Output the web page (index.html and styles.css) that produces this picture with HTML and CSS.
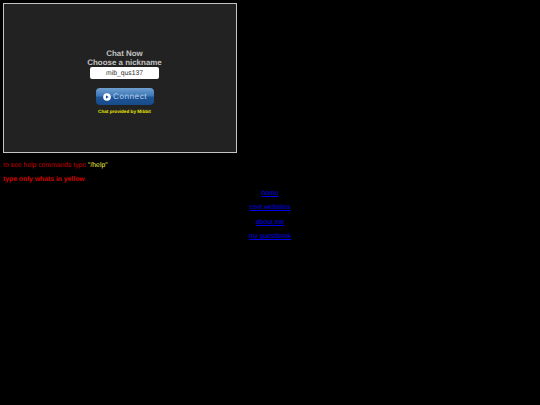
FILE: index.html
```html
<!DOCTYPE html>
<html>
<head>
<meta charset="utf-8">
<title>Chat</title>
<link rel="stylesheet" href="styles.css">
</head>
<body>
<div class="chat">
  <div class="title">Chat Now</div>
  <div class="title">Choose a nickname</div>
  <div class="nick">mib_qus137</div>
  <div class="connect">
    <svg class="play" width="8" height="8" viewBox="0 0 9 9"><circle cx="4.5" cy="4.5" r="4.3" fill="#fff"/><path d="M3.3 2.4 6.4 4.5 3.3 6.6Z" fill="#1d4f8c"/></svg>
    <span>Connect</span>
  </div>
  <div class="credit">Chat provided by Mibbit</div>
</div>
<p class="help">to see help commands type <span class="cmd">"/help"</span></p>
<p class="only">type only whats in yellow</p>
<p class="link"><a href="#">home</a></p>
<p class="link"><a href="#">cool websites</a></p>
<p class="link"><a href="#">about me</a></p>
<p class="link"><a href="#">my guestbook</a></p>
</body>
</html>
```
FILE: styles.css
```css
html { background: #000; }
body {
  margin: 0;
  padding: 3px 0 0 3px;
  font-family: "Liberation Sans", Arial, sans-serif;
  font-size: 6.8px;
  color: #c00;
  text-rendering: geometricPrecision;
}
.chat {
  padding: 45px 0 0 9px;
  box-sizing: content-box;
  width: 223px;
  height: 103px;
  border: 1px solid #c4c4c4;
  background: #222;
  display: flex;
  flex-direction: column;
  align-items: center;
}
.title { font-size: 7.95px; font-weight: bold; color: #c4c4c4; line-height: 9px; }
.nick {
  width: 69px;
  height: 12px;
  background: #fff;
  border-radius: 2px;
  color: #333;
  font-size: 6.8px;
  line-height: 13px;
  text-align: center;
}
.connect {
  width: 58px;
  height: 17px;
  margin-top: 9px;
  border-radius: 4px;
  background: linear-gradient(#6f9fd0 0%, #3f78b8 45%, #1f5596 55%, #174a88 100%);
  display: flex;
  align-items: center;
  justify-content: center;
  gap: 2px;
  color: #b9d0ea;
  font-size: 8.2px;
  letter-spacing: .5px;
}
.play { flex: none; margin-left: 1px; }
.credit { margin-top: 4px; font-size: 4.65px; font-weight: bold; color: #e6e600; line-height: 6px; }
p { margin: 0; }
.help { margin-top: 8.5px; line-height: 8px; color: #c00000; }
.cmd { color: #f0f040; }
.only { margin-top: 6px; font-weight: bold; line-height: 8px; color: #d80000; }
.link { text-align: center; margin: 6.4px 3px 0 0; line-height: 8px; }
.link a { color: #0000e8; }
```
